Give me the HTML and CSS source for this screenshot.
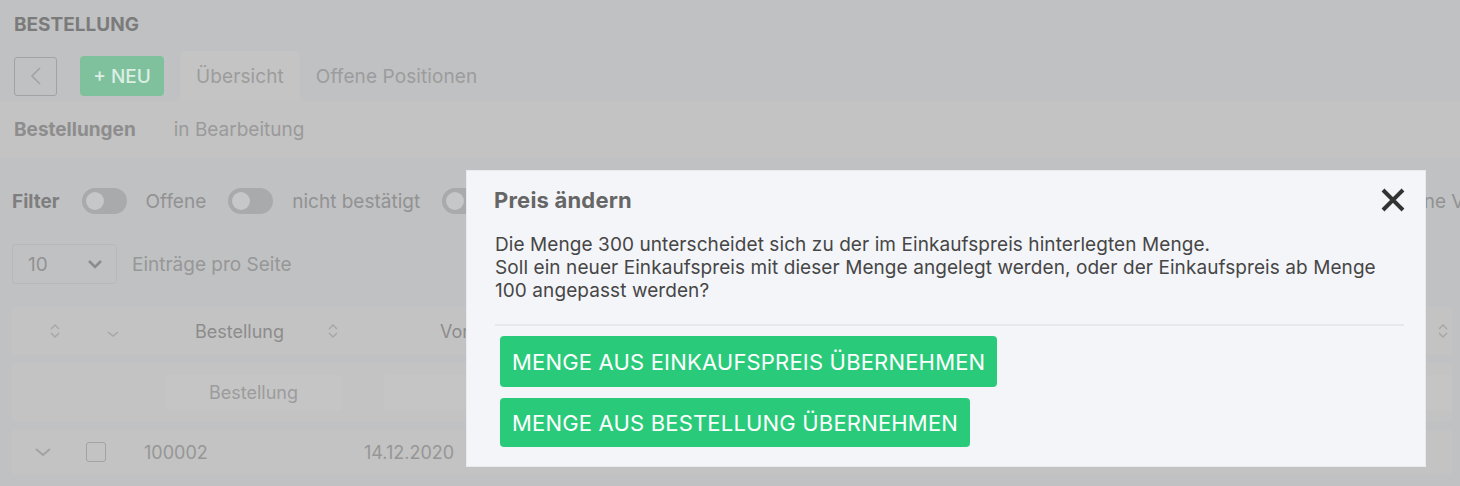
FILE: index.html
```html
<!DOCTYPE html>
<html lang="de">
<head>
<meta charset="utf-8">
<title>Bestellung</title>
<link rel="stylesheet" href="styles.css">
</head>
<body>
<div class="page">
  <header class="top">
    <h1 class="title">BESTELLUNG</h1>
    <div class="toolbar">
      <button class="back-btn" aria-label="Zurück">
        <svg width="12" height="20" viewBox="0 0 12 20"><path d="M10 2 L2 10 L10 18" fill="none" stroke="currentColor" stroke-width="1.6"/></svg>
      </button>
      <button class="new-btn">+ NEU</button>
      <div class="tabs">
        <span class="tab active">Übersicht</span>
        <span class="tab">Offene Positionen</span>
      </div>
    </div>
  </header>
  <nav class="subnav">
    <span class="subnav-item strong">Bestellungen</span>
    <span class="subnav-item">in Bearbeitung</span>
  </nav>
  <section class="content">
    <div class="filters">
      <span class="filter-label">Filter</span>
      <span class="toggle"><span class="knob"></span></span>
      <span class="filter-text">Offene</span>
      <span class="toggle"><span class="knob"></span></span>
      <span class="filter-text">nicht bestätigt</span>
      <span class="toggle"><span class="knob"></span></span>
      <span class="filter-text">bestätigt</span>
      <span class="toggle"><span class="knob"></span></span>
      <span class="filter-text">geliefert</span>
      <span class="toggle"><span class="knob"></span></span>
      <span class="filter-text last">Keine Vorgänge</span>
    </div>
    <div class="pager">
      <div class="select">
        <span>10</span>
        <svg width="16" height="10" viewBox="0 0 16 10"><path d="M2 2 L8 8 L14 2" fill="none" stroke="currentColor" stroke-width="2.6"/></svg>
      </div>
      <span class="pager-text">Einträge pro Seite</span>
    </div>
    <div class="table">
      <div class="trow thead">
        <div class="cell first"><svg class="sort" width="12" height="16" viewBox="0 0 12 16"><path d="M2 6 L6 2 L10 6 M2 10 L6 14 L10 10" fill="none" stroke="currentColor" stroke-width="1.4"/></svg></div>
        <div class="cell center"><svg class="chev-sm" width="12" height="8" viewBox="0 0 12 8"><path d="M1 2 L6 6 L11 2" fill="none" stroke="currentColor" stroke-width="1.4"/></svg></div>
        <div class="cell head-col"><span>Bestellung</span><svg class="sort" width="12" height="16" viewBox="0 0 12 16"><path d="M2 6 L6 2 L10 6 M2 10 L6 14 L10 10" fill="none" stroke="currentColor" stroke-width="1.4"/></svg></div>
        <div class="cell head-col2"><span>Vorgangsdatum</span></div>
        <div class="cell head-end"><svg class="sort" width="12" height="16" viewBox="0 0 12 16"><path d="M2 6 L6 2 L10 6 M2 10 L6 14 L10 10" fill="none" stroke="currentColor" stroke-width="1.4"/></svg></div>
      </div>
      <div class="trow tfilter">
        <div class="cell"></div>
        <div class="cell"></div>
        <div class="cell"><div class="finput">Bestellung</div></div>
        <div class="cell"><div class="finput">Vorgangsdatum</div></div>
        <div class="cell"><div class="finput small"></div></div>
      </div>
      <div class="trow tdata">
        <div class="cell"><svg width="16" height="10" viewBox="0 0 16 10"><path d="M1 2 L8 8 L15 2" fill="none" stroke="currentColor" stroke-width="2"/></svg></div>
        <div class="cell"><span class="checkbox"></span></div>
        <div class="cell">100002</div>
        <div class="cell">14.12.2020</div>
        <div class="cell"></div>
      </div>
    </div>
  </section>
</div>

<div class="overlay">
  <div class="modal" role="dialog">
    <div class="modal-head">
      <h2 class="modal-title">Preis ändern</h2>
      <button class="close-btn" aria-label="Schließen">
        <svg width="26" height="26" viewBox="0 0 26 26"><path d="M3 3 L23 23 M23 3 L3 23" fill="none" stroke="currentColor" stroke-width="4"/></svg>
      </button>
    </div>
    <p class="modal-text">Die Menge 300 unterscheidet sich zu der im Einkaufspreis hinterlegten Menge.<br>Soll ein neuer Einkaufspreis mit dieser Menge angelegt werden, oder der Einkaufspreis ab Menge 100 angepasst werden?</p>
    <div class="modal-actions">
      <button class="action-btn">MENGE AUS EINKAUFSPREIS ÜBERNEHMEN</button>
      <button class="action-btn">MENGE AUS BESTELLUNG ÜBERNEHMEN</button>
    </div>
  </div>
</div>
</body>
</html>
```

FILE: styles.css
```css
* { box-sizing: border-box; }
html, body { margin: 0; padding: 0; }
body {
  width: 1460px;
  height: 486px;
  overflow: hidden;
  background: #c0c1c3;
  font-family: Inter, "Noto Sans", "Liberation Sans", sans-serif;
  color: #8e8e8e;
}
button { font-family: inherit; }

.top {
  background: #c0c1c3;
  height: 101px;
  padding-top: 14px;
}
.title {
  margin: 0 0 15px 14px;
  font-size: 19px;
  line-height: 22px;
  font-weight: 700;
  color: #7b7b7b;
}
.toolbar {
  display: flex;
  align-items: center;
  height: 50px;
  padding-left: 14px;
}
.back-btn {
  width: 43px;
  height: 39px;
  border: 1.5px solid #a2a2a3;
  border-radius: 3px;
  background: transparent;
  color: #a2a2a3;
  display: flex;
  align-items: center;
  justify-content: center;
  padding: 0;
}
.new-btn {
  margin-left: 23px;
  width: 84px;
  height: 40px;
  border: 0;
  border-radius: 4px;
  background: #7fc19d;
  color: #ddeee5;
  font-size: 19px;
  font-weight: 500;
  padding: 0;
}
.tabs {
  display: flex;
  align-self: stretch;
  margin-left: 16px;
}
.tab {
  display: flex;
  align-items: center;
  padding: 0 16px;
  font-size: 19px;
  letter-spacing: 0.1px;
  color: #9c9c9c;
  border-radius: 6px 6px 0 0;
}
.tab.active { background: #c4c4c4; }

.subnav {
  background: #c3c3c3;
  height: 57px;
  display: flex;
  align-items: center;
  padding-left: 14px;
  gap: 38px;
}
.subnav-item { font-size: 19px; color: #9a9a9a; }
.subnav-item.strong { font-weight: 700; color: #8d8d8d; }

.content { padding: 0 8px 0 12px; }
.filters {
  height: 86px;
  display: flex;
  align-items: center;
  white-space: nowrap;
}
.filter-label { font-weight: 700; font-size: 19px; color: #7e7e7e; margin-right: 22px; }
.toggle {
  width: 45px;
  height: 26px;
  border-radius: 13px;
  background: #a9aaab;
  position: relative;
  margin-right: 19px;
  flex: none;
}
.knob {
  position: absolute;
  left: 4px;
  top: 4px;
  width: 18px;
  height: 18px;
  border-radius: 50%;
  background: #c6c7c8;
}
.filter-text { font-size: 19px; color: #929292; margin-right: 22px; flex: none; }
.filter-text.last { margin-left: auto; margin-right: -86px; }

.pager {
  display: flex;
  align-items: center;
  height: 40px;
}
.select {
  width: 105px;
  height: 40px;
  border: 1.5px solid #b9b9ba;
  border-radius: 3px;
  display: flex;
  align-items: center;
  justify-content: space-between;
  padding: 0 13px 0 15px;
  font-size: 19px;
  color: #929292;
}
.select svg { color: #8c8c8c; }
.pager-text { margin-left: 15px; font-size: 19px; color: #979797; }

.table { margin-top: 23px; }
.trow {
  display: grid;
  grid-template-columns: 72px 58px 222px 1fr 44px;
  align-items: center;
  background: #c3c3c3;
}
.thead { height: 48px; font-size: 18px; color: #8c8c8c; }
.tfilter { height: 59px; margin-top: 8px; }
.tdata { height: 44px; margin-top: 8px; font-size: 18px; color: #969696; }
.cell { display: flex; align-items: center; height: 100%; }
.cell.center { justify-content: center; }
.cell.first { padding-left: 37px; }
.sort { color: #a6a6a7; }
.chev-sm { color: #a6a6a7; margin-top: 6px; }
.head-col { justify-content: space-between; padding: 0 25px 0 53px; }
.head-col2 { padding-left: 76px; }
.head-end { justify-content: flex-end; padding-right: 3px; }
.tfilter .cell:nth-child(3) { padding: 0 22px 0 23px; }
.tfilter .cell:nth-child(4) { padding: 0 20px; }
.tfilter .cell:nth-child(5) { padding-left: 19px; }
.finput {
  width: 100%;
  height: 35px;
  background: #c5c5c6;
  border-radius: 3px;
  display: flex;
  align-items: center;
  justify-content: center;
  font-size: 18px;
  color: #9c9c9c;
}
.finput.small { width: 25px; }
.tdata .cell:nth-child(1) { color: #a2a2a3; padding-left: 23px; }
.tdata .cell:nth-child(2) { padding-left: 2px; }
.checkbox {
  width: 20px;
  height: 20px;
  border: 1.5px solid #a2a2a3;
  border-radius: 3px;
}
.tdata .cell:nth-child(3) { padding-left: 2px; }

.overlay {
  position: fixed;
  inset: 0;
}
.modal {
  position: absolute;
  left: 466px;
  top: 170px;
  width: 960px;
  height: 297px;
  background: #f4f5f9;
  border: 1px solid #e9eaee;
  color: #464646;
}
.modal-head {
  display: flex;
  align-items: center;
  justify-content: space-between;
  height: 58px;
  padding: 0 19px 0 27px;
}
.modal-title {
  margin: 0;
  font-size: 22px;
  font-weight: 700;
  letter-spacing: 0.2px;
  color: #666666;
}
.close-btn {
  border: 0;
  background: transparent;
  padding: 0;
  width: 26px;
  height: 26px;
  color: #333333;
  display: flex;
}
.modal-text {
  margin: 4px 21px 0 28px;
  padding-bottom: 22px;
  font-size: 19px;
  line-height: 23px;
  letter-spacing: 0.08px;
  color: #464646;
  border-bottom: 2px solid #e7e8ec;
}
.modal-actions {
  display: flex;
  flex-direction: column;
  align-items: flex-start;
  gap: 11px;
  padding: 10px 0 0 33px;
}
.action-btn {
  height: 51px;
  padding: 0 12px;
  border: 0;
  border-radius: 4px;
  background: #29cb7b;
  color: #ffffff;
  font-size: 22px;
  font-weight: 400;
  letter-spacing: 0.18px;
}
.action-btn + .action-btn { height: 49px; }
```
